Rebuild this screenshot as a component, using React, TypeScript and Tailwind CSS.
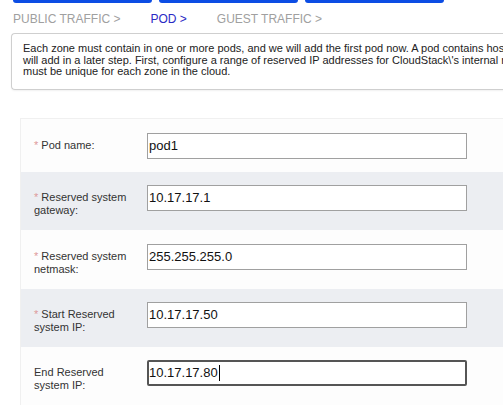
const font = { fontFamily: '"Liberation Sans", Arial, sans-serif' };

const fields = [
  { label: 'Pod name:', value: 'pod1', required: true },
  { label: 'Reserved system gateway:', value: '10.17.17.1', required: true },
  { label: 'Reserved system netmask:', value: '255.255.255.0', required: true },
  { label: 'Start Reserved system IP:', value: '10.17.17.50', required: true },
  { label: 'End Reserved system IP:', value: '10.17.17.80', required: false },
];

export default function App() {
  return (
    <div className="h-[411px] w-[503px] overflow-hidden bg-white" style={font}>
      {/* step buttons, mostly scrolled off */}
      <div className="flex gap-[7px] pl-[13px]">
        <div className="h-[3px] w-[139px] rounded-b-[4px] bg-[#0c4de4]" />
        <div className="h-[3px] w-[139px] rounded-b-[4px] bg-[#0c4de4]" />
        <div className="h-[3px] w-[139px] rounded-b-[4px] bg-[#0c4de4]" />
      </div>

      <div className="mt-[9px] flex gap-[30px] pl-[13px] text-[12px] leading-[14px] text-[#a0a0a0]">
        <span>PUBLIC TRAFFIC &gt;</span>
        <span className="text-[#2a2ac4]">POD &gt;</span>
        <span>GUEST TRAFFIC &gt;</span>
      </div>

      <div className="ml-[11px] mt-[7px] h-[57px] w-[520px] overflow-hidden rounded-l-[4px] border border-r-0 border-[#cfcfcf] pl-[11px] pt-[9px] shadow-[0_1px_2px_rgba(0,0,0,0.06)]">
        <p className="whitespace-nowrap text-[11px] leading-[11.5px] text-[#222]">
          Each zone must contain in one or more pods, and we will add the first pod now. A pod contains hosts and primary storage servers, which you
          <br />
          will add in a later step. First, configure a range of reserved IP addresses for CloudStack\'s internal management traffic. The reserved IP range
          <br />
          must be unique for each zone in the cloud.
        </p>
      </div>

      <div className="ml-[20px] mt-[28px] border-l border-t border-[#f0f0f0]">
        {fields.map((f, i) => {
          const last = i === fields.length - 1;
          return (
            <div
              key={i}
              className={`flex items-start pl-[13px] ${i % 2 === 1 ? 'bg-[#eceef2]' : 'bg-[#fdfdfd]'} ${i === 0 ? 'h-[53px] pt-[14px]' : i === 2 ? 'h-[59px] pt-[14px]' : 'h-[58px] pt-[13px]'}`}
            >
              <label className="mt-[6px] w-[113px] pr-[8px] text-[11px] leading-[13px] text-[#333]">
                {f.required && <span className="text-[#dd9a9a]">* </span>}
                {f.label}
              </label>
              <div
                className={`flex h-[26px] w-[320px] items-center bg-white text-[13px] text-[#111] ${last ? 'rounded-[2px] border-2 border-[#555]' : 'border border-[#a0a0a0] pl-[1px]'}`}
              >
                <span>{f.value}</span>
                {last && <span className="ml-[1px] h-[16px] w-px bg-black" />}
              </div>
            </div>
          );
        })}
      </div>
    </div>
  );
}
